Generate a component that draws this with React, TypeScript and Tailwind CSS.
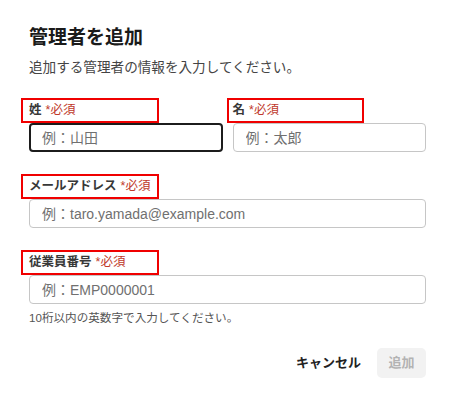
import React from 'react';

const font = { fontFamily: '"Liberation Sans", "Noto Sans CJK JP", sans-serif' };

// Label with the red outline that sits around it in the picture
function FieldLabel({ text, boxClass }: { text: string; boxClass: string }) {
    return (
        <div className="relative h-[25px] flex items-center text-[12.5px] leading-none">
            <span className={`absolute top-0 h-[25px] border-2 border-[#f00000] pointer-events-none ${boxClass}`} />
            <span className="font-semibold text-[#383838]">{text}</span>
            <span className="ml-1 text-[#c0392b]">*必須</span>
        </div>
    );
}

function TextInput({ placeholder, focused }: { placeholder: string; focused?: boolean }) {
    return (
        <input
            placeholder={placeholder}
            className={`block w-full h-[29px] px-3 rounded-[4px] bg-white text-[14px] text-[#222] placeholder:text-[#707070] outline-none ${focused ? 'border-2 border-[#1c1c1c] px-[11px]' : 'border border-[#c6c6c6]'
                }`}
            style={font}
        />
    );
}

export default function App() {
    return (
        <div className="w-[455px] h-[407px] bg-white px-[29px] pt-[24px]" style={font}>
            <h2 className="text-[19px] leading-[28px] font-bold text-[#1a1a1a]">管理者を追加</h2>
            <p className="mt-[6px] text-[13.6px] leading-[20px] text-[#444444]">追加する管理者の情報を入力してください。</p>

            <div className="mt-[20px] grid grid-cols-2 gap-x-[10px]">
                <div>
                    <FieldLabel text="姓" boxClass="-left-2 w-[138px]" />
                    <TextInput placeholder="例：山田" focused />
                </div>
                <div>
                    <FieldLabel text="名" boxClass="-left-[6px] w-[137px]" />
                    <TextInput placeholder="例：太郎" />
                </div>
            </div>

            <div className="mt-[22px]">
                <FieldLabel text="メールアドレス" boxClass="-left-2 w-[138px]" />
                <TextInput placeholder="例：taro.yamada@example.com" />
            </div>

            <div className="mt-[22px]">
                <FieldLabel text="従業員番号" boxClass="-left-2 w-[138px]" />
                <TextInput placeholder="例：EMP0000001" />
                <p className="mt-[6px] text-[11.6px] leading-[16px] text-[#555555]">10桁以内の英数字で入力してください。</p>
            </div>

            <div className="mt-[22px] flex items-center justify-end gap-4">
                <button className="text-[13px] font-bold text-[#222222]">キャンセル</button>
                <button className="w-[49px] h-[30px] rounded-[5px] bg-[#f2f2f2] text-[13px] font-semibold text-[#b3b3b3]">追加</button>
            </div>
        </div>
    );
}
